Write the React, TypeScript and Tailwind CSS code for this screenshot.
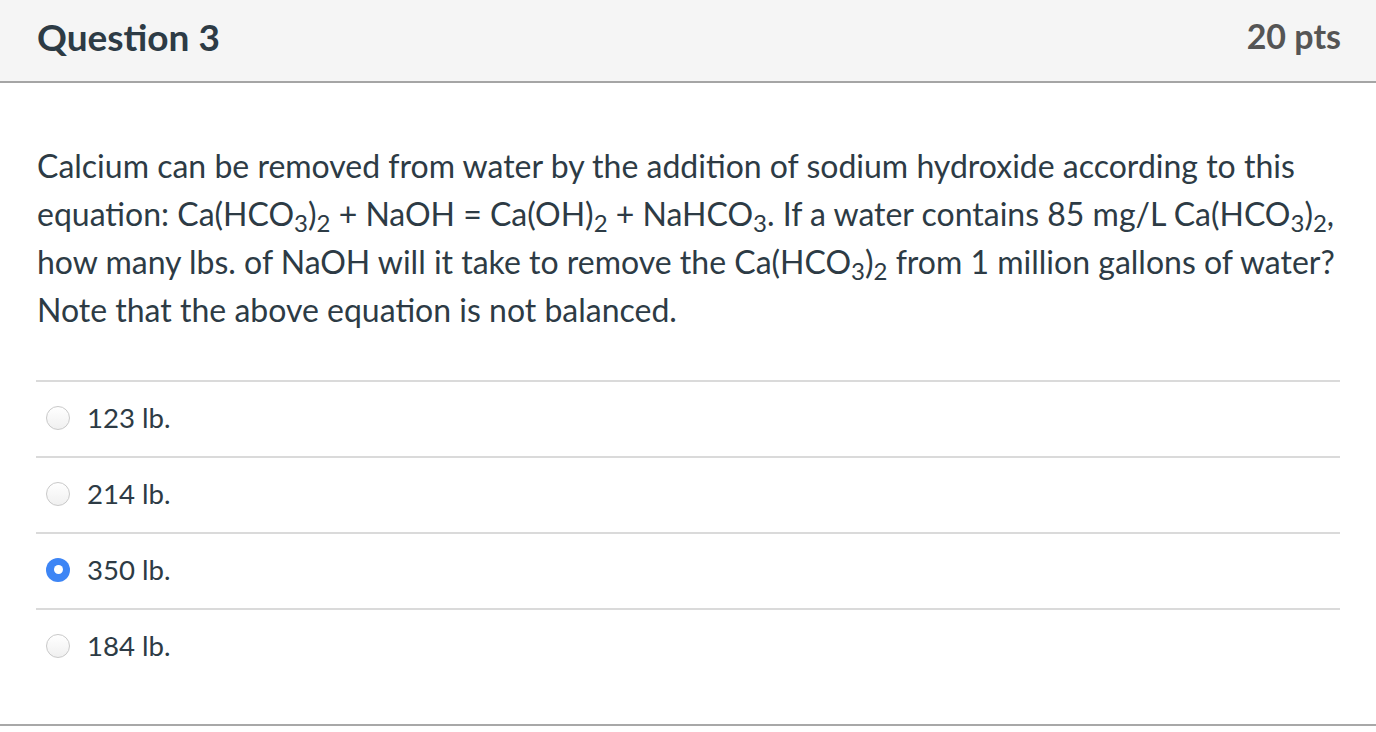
import React from "react";

const answers = [
  { label: "123 lb.", selected: false },
  { label: "214 lb.", selected: false },
  { label: "350 lb.", selected: true },
  { label: "184 lb.", selected: false },
];

function Radio({ selected }: { selected: boolean }) {
  if (selected) {
    return (
      <span className="flex h-[24px] w-[24px] shrink-0 items-center justify-center rounded-full bg-[#3d85f5]">
        <span className="h-[9px] w-[9px] rounded-full bg-white" />
      </span>
    );
  }
  return (
    <span className="block h-[24px] w-[24px] shrink-0 rounded-full border border-[#c9c9c9] bg-gradient-to-b from-[#ffffff] to-[#f0f0f0]" />
  );
}

export default function App() {
  return (
    <div
      className="h-[732px] w-[1376px] bg-white text-[#2d3b45]"
      style={{ fontFamily: "Lato, 'Open Sans', sans-serif" }}
    >
      <div className="flex h-[83px] items-center justify-between border-b-2 border-[#a5a5a5] bg-[#f5f5f5] pl-[37px] pr-[35px] pb-[9px]">
        <h2 className="text-[37px] font-bold leading-none text-[#2d3b45]">Question 3</h2>
        <span className="text-[34px] font-bold leading-none text-[#555555]">20 pts</span>
      </div>
      <div className="h-[643px] border-b-2 border-[#a8a8a8] px-[36px]">
        <p className="pl-[1px] pt-[59px] text-[32px] leading-[48px]">
          Calcium can be removed from water by the addition of sodium hydroxide according to this
          equation: Ca(HCO<sub>3</sub>)<sub>2</sub> + NaOH = Ca(OH)<sub>2</sub> + NaHCO<sub>3</sub>. If
          a water contains 85 mg/L Ca(HCO<sub>3</sub>)<sub>2</sub>, how many lbs. of NaOH will it take
          to remove the Ca(HCO<sub>3</sub>)<sub>2</sub> from 1 million gallons of water?
          <br />
          Note that the above equation is not balanced.
        </p>
        <div className="mt-[46px]">
          {answers.map((a) => (
            <div
              key={a.label}
              className="flex h-[76px] items-center gap-[17px] border-t-2 border-[#dadada] pb-[3px] pl-[10px]"
            >
              <Radio selected={a.selected} />
              <span className="text-[27.6px] leading-none">{a.label}</span>
            </div>
          ))}
        </div>
      </div>
    </div>
  );
}
